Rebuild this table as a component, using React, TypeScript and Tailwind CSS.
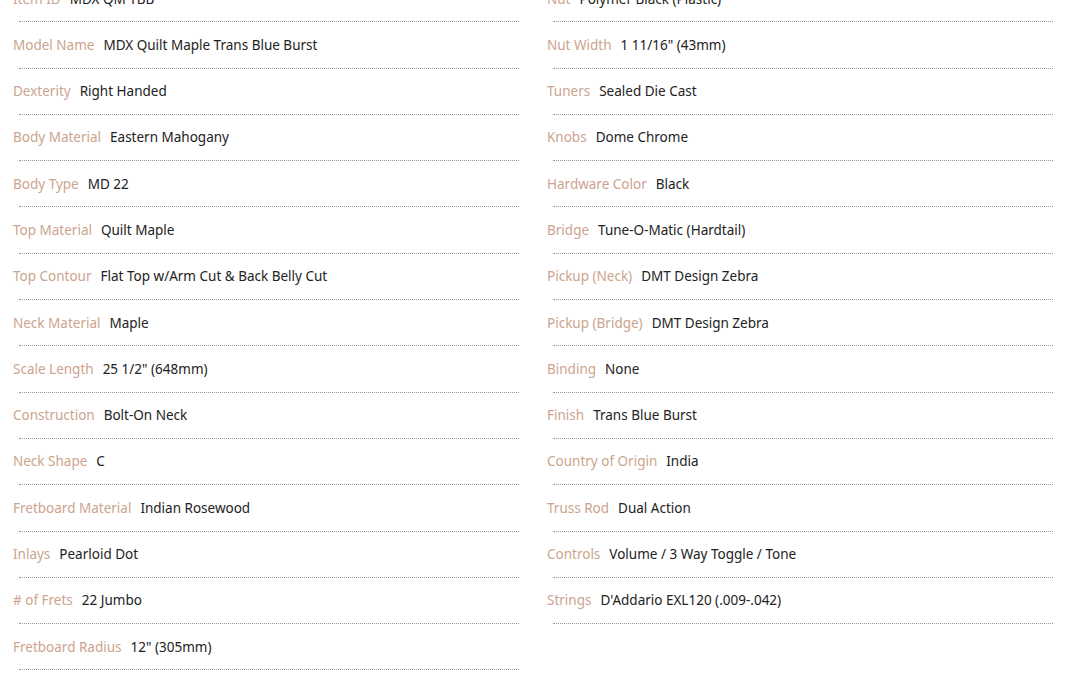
const left: [string, string][] = [
  ["Item ID", "MDX QM TBB"],
  ["Model Name", "MDX Quilt Maple Trans Blue Burst"],
  ["Dexterity", "Right Handed"],
  ["Body Material", "Eastern Mahogany"],
  ["Body Type", "MD 22"],
  ["Top Material", "Quilt Maple"],
  ["Top Contour", "Flat Top w/Arm Cut & Back Belly Cut"],
  ["Neck Material", "Maple"],
  ["Scale Length", "25 1/2\" (648mm)"],
  ["Construction", "Bolt-On Neck"],
  ["Neck Shape", "C"],
  ["Fretboard Material", "Indian Rosewood"],
  ["Inlays", "Pearloid Dot"],
  ["# of Frets", "22 Jumbo"],
  ["Fretboard Radius", "12\" (305mm)"],
];

const right: [string, string][] = [
  ["Nut", "Polymer Black (Plastic)"],
  ["Nut Width", "1 11/16\" (43mm)"],
  ["Tuners", "Sealed Die Cast"],
  ["Knobs", "Dome Chrome"],
  ["Hardware Color", "Black"],
  ["Bridge", "Tune-O-Matic (Hardtail)"],
  ["Pickup (Neck)", "DMT Design Zebra"],
  ["Pickup (Bridge)", "DMT Design Zebra"],
  ["Binding", "None"],
  ["Finish", "Trans Blue Burst"],
  ["Country of Origin", "India"],
  ["Truss Rod", "Dual Action"],
  ["Controls", "Volume / 3 Way Toggle / Tone"],
  ["Strings", "D'Addario EXL120 (.009-.042)"],
];

function SpecRow({ label, value }: { label: string; value: string }) {
  return (
    <li>
      <div className="flex h-[45.3px] items-center gap-[9px] whitespace-nowrap">
        <span className="text-[#cca48e]">{label}</span>
        <span className="text-[#222]">{value}</span>
      </div>
      <div className="ml-[6px] border-t border-dotted border-[#9a9a9a]" />
    </li>
  );
}

export default function App() {
  return (
    <div
      className="h-[675px] w-[1080px] overflow-hidden bg-white text-[13.5px]"
      style={{ fontFamily: '"Noto Sans", "Open Sans", sans-serif' }}
    >
      <div className="mt-[-24px] grid grid-cols-2 gap-x-[28px] pl-[13px] pr-[27px]">
        <ul>
          {left.map(([l, v]) => (
            <SpecRow key={l} label={l} value={v} />
          ))}
        </ul>
        <ul>
          {right.map(([l, v]) => (
            <SpecRow key={l} label={l} value={v} />
          ))}
        </ul>
      </div>
    </div>
  );
}
